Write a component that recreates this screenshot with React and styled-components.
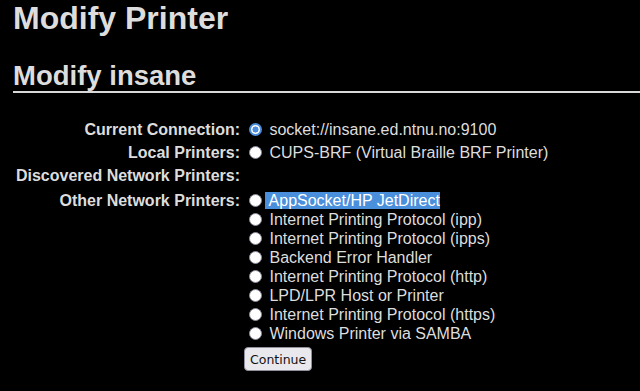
import styled, { createGlobalStyle } from "styled-components";

const GlobalStyle = createGlobalStyle`
  body {
    margin: 0;
    background: #000;
    color: #dddddd;
    font-family: "Liberation Sans", Arial, sans-serif;
    font-size: 16px;
  }
`;

const Page = styled.div`
  padding-left: 13px;
`;

const Title = styled.h1`
  margin: 0;
  font-size: 32px;
  line-height: 37px;
  font-weight: bold;
`;

const Subtitle = styled.h2`
  margin: 23px 0 0;
  font-size: 27.5px;
  line-height: 31px;
  font-weight: bold;
  border-bottom: 2px solid #d8d8d8;
`;

const Form = styled.div`
  display: grid;
  grid-template-columns: 227px 1fr;
  column-gap: 4px;
  margin-top: 25px;
`;

const Label = styled.div`
  padding: 2px 0;
  line-height: 19px;
  font-weight: bold;
  text-align: right;
  white-space: nowrap;
`;

const Value = styled.div`
  padding: 2px 0;
  line-height: 19px;
  min-height: ${(p) => (p.$tall ? "21px" : "0")};
`;

const Option = styled.div`
  white-space: nowrap;
`;

const Radio = styled.span`
  display: inline-block;
  box-sizing: border-box;
  width: 13px;
  height: 13px;
  margin: 0 3px 0 5px;
  vertical-align: -1px;
  border-radius: 50%;
  border: ${(p) => (p.checked ? "2px solid #4c8edd" : "1.5px solid #8a8a98")};
  background: ${(p) =>
    p.checked
      ? "radial-gradient(circle, #4c8edd 0 2.8px, #fff 3.3px)"
      : "#fff"};
`;

const Selected = styled.span`
  background: #4a8fdc;
  color: #fff;
`;

const Button = styled.button`
  display: block;
  margin-top: 4px;
  height: 24px;
  padding: 0 5px;
  font-family: "DejaVu Sans", sans-serif;
  font-size: 12.5px;
  color: #111;
  background: #e9e9ed;
  border: 1px solid #8f8f9d;
  border-radius: 4px;
`;

const others = [
  "Internet Printing Protocol (ipp)",
  "Internet Printing Protocol (ipps)",
  "Backend Error Handler",
  "Internet Printing Protocol (http)",
  "LPD/LPR Host or Printer",
  "Internet Printing Protocol (https)",
  "Windows Printer via SAMBA",
];

export default function App() {
  return (
    <Page>
      <GlobalStyle />
      <Title>Modify Printer</Title>
      <Subtitle>Modify insane</Subtitle>
      <Form>
        <Label>Current Connection:</Label>
        <Value>
          <Option>
            <Radio checked /> socket://insane.ed.ntnu.no:9100
          </Option>
        </Value>
        <Label>Local Printers:</Label>
        <Value>
          <Option>
            <Radio /> CUPS-BRF (Virtual Braille BRF Printer)
          </Option>
        </Value>
        <Label>Discovered Network Printers:</Label>
        <Value $tall />
        <Label>Other Network Printers:</Label>
        <Value>
          <Option>
            <Radio />
            <Selected> AppSocket/HP JetDirect</Selected>
          </Option>
          {others.map((name) => (
            <Option key={name}>
              <Radio /> {name}
            </Option>
          ))}
          <Button>Continue</Button>
        </Value>
      </Form>
    </Page>
  );
}
